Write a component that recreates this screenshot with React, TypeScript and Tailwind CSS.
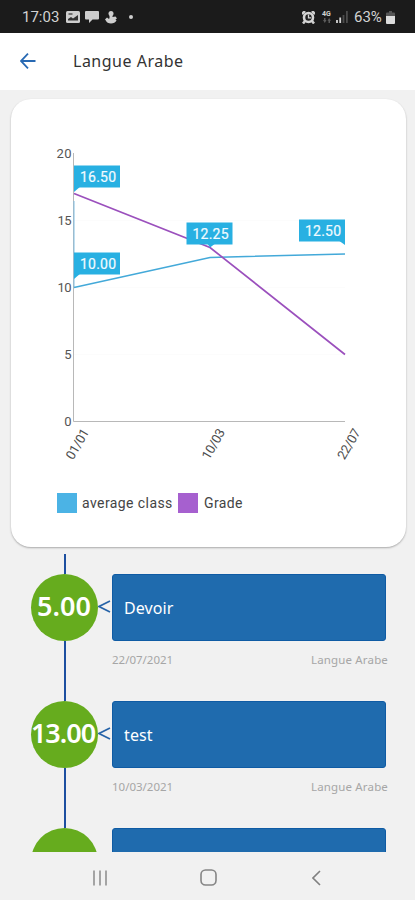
const UI = "font-['Noto_Sans','Open_Sans',sans-serif]";

function StatusBar() {
  return (
    <header className="flex h-[33px] shrink-0 items-center justify-between bg-[#1b1b1b] pl-[22px] pr-[20px] pt-px text-[#d2d2d2]">
      <div className="flex items-center">
        <span className="w-[37px] whitespace-nowrap font-['Roboto',sans-serif] text-[15px] leading-5">17:03</span>
        <svg className="ml-[7px]" width="14" height="12" viewBox="0 0 14 12">
          <rect width="14" height="12" rx="1.5" fill="#cecece" />
          <path d="M2 9.500V8l3-2 2 1.500L12 4v5.500z" fill="#333" />
          <path d="M2.500 3h4" stroke="#333" strokeWidth="1.200" />
        </svg>
        <svg className="ml-[5px]" width="14" height="12" viewBox="0 0 14 12">
          <path d="M1 0h12a1 1 0 0 1 1 1v6.500a1 1 0 0 1-1 1H7.500L4 12V8.500H1a1 1 0 0 1-1-1V1a1 1 0 0 1 1-1z" fill="#cecece" />
        </svg>
        <svg className="ml-[6px]" width="13" height="13" viewBox="0 0 13 13" fill="#cecece">
          <circle cx="6" cy="2.500" r="2.500" />
          <path d="M4.500 3h3v3l3-.5 1.500 2-1.500.7 1 1.300C10.500 11.500 8.500 12.500 6 12.500S1.500 11.500.8 9.500L0 8.500l2-2 2 1.500.5-1z" />
        </svg>
        <span className="ml-[11px] size-1 rounded-full bg-[#cecece]" />
      </div>
      <div className="flex items-center">
        <svg width="13" height="13" viewBox="0 0 13 13">
          <path d="M0 3 3 0M13 3l-3-3" stroke="#cecece" strokeWidth="2.600" />
          <path d="M1 12.500 3 10M12 12.500 10 10" stroke="#cecece" strokeWidth="2.600" />
          <circle cx="6.500" cy="6.500" r="4.500" fill="#222" stroke="#d5d5d5" strokeWidth="2.600" />
          <path d="M6.500 3.500v3.300H9" stroke="#d5d5d5" strokeWidth="1.300" fill="none" />
        </svg>
        <div className="ml-[7px] flex w-[9px] flex-col items-center font-['Roboto',sans-serif] text-[7px] font-bold leading-[7px]">
          <span>4G</span>
          <svg width="8" height="5" viewBox="0 0 8 5" fill="#5c5c5c">
            <path d="M0 2h1V0h1.500v2h1L1.800 5zM4.500 2.800 6.200 0 8 2.800H7V5H5.500V2.800z" />
          </svg>
        </div>
        <svg className="ml-[5px]" width="12" height="12" viewBox="0 0 12 12">
          <path d="M1 9v3M4.200 6.500V12" stroke="#d5d5d5" strokeWidth="1.800" />
          <path d="M7.500 4v8M10.900 0v12" stroke="#4c4c4c" strokeWidth="1.800" />
        </svg>
        <span className="ml-[6px] w-[28px] whitespace-nowrap font-['Roboto',sans-serif] text-[15px] leading-5">63%</span>
        <svg className="ml-[4px]" width="9" height="13" viewBox="0 0 9 13">
          <path d="M3 0h3v1.500h2a1 1 0 0 1 1 1V6H0V2.500a1 1 0 0 1 1-1h2z" fill="#555" />
          <path d="M0 5h9v7a1 1 0 0 1-1 1H1a1 1 0 0 1-1-1z" fill="#dcdcdc" />
        </svg>
      </div>
    </header>
  );
}

const yTicks = [
  { y: 54.5, label: "20", len: 15 },
  { y: 121.5, label: "15", len: 14 },
  { y: 188.500, label: "10", len: 14 },
  { y: 255.500, label: "5", len: 7.500 },
  { y: 322.500, label: "0", len: 7.500 },
];

const xTicks = [
  { x: 62, y: 361.500, label: "01/01" },
  { x: 198, y: 361.500, label: "10/03" },
  { x: 333.500, y: 361.500, label: "22/07" },
];

const markers = [
  { x: 63, y: 66.500, label: "16.50", tail: "63,87 63,93 70,87" },
  { x: 63, y: 153.500, label: "10.00", tail: "63,174 63,180 70,174" },
  { x: 175.500, y: 123.500, label: "12.25", tail: "196,144 199,148.500 205,144" },
  { x: 288, y: 120.500, label: "12.50", tail: "327,141 334,146 334,141" },
];

function GradeChart() {
  return (
    <svg width="395" height="389" viewBox="0 0 395 389" className="block font-['Roboto',sans-serif]">
      <path d="M63 255.500h271M63 188.500h271M63 121.500h271" stroke="#fcfcfc" />
      <path d="M62.500 54v268.500H334" fill="none" stroke="#b8b8b8" />
      {yTicks.map((t) => (
        <text key={t.label} x="60.500" y={t.y + 4.500} textAnchor="end" textLength={t.len} fontSize="13" fill="#555">{t.label}</text>
      ))}
      {xTicks.map((t) => (
        <text key={t.label} transform={`translate(${t.x} ${t.y}) rotate(-60)`} fontSize="13" textLength="33" fill="#4c4c4c">{t.label}</text>
      ))}
      <path d="M63 102v86.500" stroke="#80bfe4" />
      <path d="M63 188.500 199 158.500 334 155" fill="none" stroke="#43a9d9" strokeWidth="1.500" />
      <path d="M63 94.500 199 148.500 334 255.500" fill="none" stroke="#9b50bd" strokeWidth="1.700" />
      {markers.map((m) => (
        <g key={m.label}>
          <polygon points={m.tail} fill="#28b0e2" />
          <rect x={m.x} y={m.y} width="46" height="22" fill="#28b0e2" />
          <text x={m.x + 6} y={m.y + 16} fontSize="14" textLength="36" fill="#f2fbff" stroke="#f2fbff" strokeWidth=".2">{m.label}</text>
        </g>
      ))}
    </svg>
  );
}

function Legend() {
  return (
    <div className="flex items-center pl-[46px] font-['Roboto',sans-serif] text-[14px] leading-5 text-[#444]">
      <span className="size-5 bg-[#4bb3e5]" />
      <span className="ml-[5px] w-[92px] whitespace-nowrap pt-px tracking-[0.42px]">average class</span>
      <span className="ml-[4px] size-5 bg-[#a660cf]" />
      <span className="ml-[6px] pt-px tracking-[0.4px]">Grade</span>
    </div>
  );
}

type Item = { grade?: string; title?: string; date?: string; wide?: boolean };

function TimelineItem({ grade, title, date, wide }: Item) {
  return (
    <div className="flex h-[127px] shrink-0">
      <div className="ml-[31px] flex w-[67px] flex-col items-center">
        <div className="h-5 w-[2px] shrink-0 bg-[#1d4fa0]" />
        <div
          className={`flex size-[67px] shrink-0 items-center justify-center rounded-full bg-[#66ac1e] pb-0.5 text-[27px] font-semibold text-white ${
            wide ? "pr-[3px] tracking-[-1px]" : "pr-px"
          }`}
        >
          {grade}
        </div>
        <div className="w-[2px] grow bg-[#1d4fa0]" />
      </div>
      {title ? (
        <svg className="mt-[46px] shrink-0" width="14" height="13" viewBox="0 0 14 13">
          <path d="M12 1 1 6.500 12 12" fill="none" stroke="#2663a8" strokeWidth="1.700" />
        </svg>
      ) : (
        <div className="w-[14px] shrink-0" />
      )}
      <div className="mt-5 w-[276px]">
        <div className="flex h-[67px] w-[274px] items-center rounded-[3px] border border-[#0f5ba4] bg-[#1f6bae] pl-[11px] text-[16px] tracking-[0.1px] text-white">
          {title}
        </div>
        {date && (
          <div className="mt-[11px] flex justify-between text-[11.500px] leading-4 text-[#a6a6a6]">
            <span>{date}</span>
            <span className="tracking-[0.150px]">Langue Arabe</span>
          </div>
        )}
      </div>
    </div>
  );
}

export default function App() {
  return (
    <div className={`flex h-[900px] w-[415px] flex-col overflow-hidden bg-[#f1f1f1] ${UI}`}>
      <StatusBar />
      <div className="flex h-[57px] shrink-0 items-center bg-white pb-px pl-5">
        <svg width="16" height="16" viewBox="0 0 16 16">
          <path d="M15.500 8H1M8 .7.900 8 8 15.300" fill="none" stroke="#2869b3" strokeWidth="1.800" />
        </svg>
        <h1 className="ml-[37px] text-[16px] tracking-[0.5px] text-[#333]">Langue Arabe</h1>
      </div>
      <main className="flex h-[762px] shrink-0 flex-col overflow-hidden pt-[9px]">
        <section className="ml-[11px] h-[448px] w-[395px] shrink-0 rounded-[20px] bg-white shadow-[0_1px_2px_rgba(0,0,0,0.3)]">
          <GradeChart />
          <div className="mt-[4px]">
            <Legend />
          </div>
        </section>
        <div className="mt-[7px] flex flex-col">
          <TimelineItem grade="5.00" title="Devoir" date="22/07/2021" />
          <TimelineItem grade="13.00" title="test" date="10/03/2021" wide />
          <TimelineItem />
        </div>
      </main>
      <nav className="flex grow items-center pb-[1px] pt-[4px]">
        <svg className="ml-[92px]" width="16" height="16" viewBox="0 0 16 16">
          <path d="M2 .5v15M8 .5v15M14 .5v15" stroke="#8b8b8b" strokeWidth="1.500" />
        </svg>
        <svg className="ml-[92px]" width="17" height="17" viewBox="0 0 17 17">
          <rect x="1" y="1" width="15" height="15" rx="4.500" fill="none" stroke="#858585" strokeWidth="1.600" />
        </svg>
        <svg className="ml-[95px]" width="9" height="16" viewBox="0 0 9 16">
          <path d="M8 1 1 8l7 7" fill="none" stroke="#808080" strokeWidth="1.600" />
        </svg>
      </nav>
    </div>
  );
}
